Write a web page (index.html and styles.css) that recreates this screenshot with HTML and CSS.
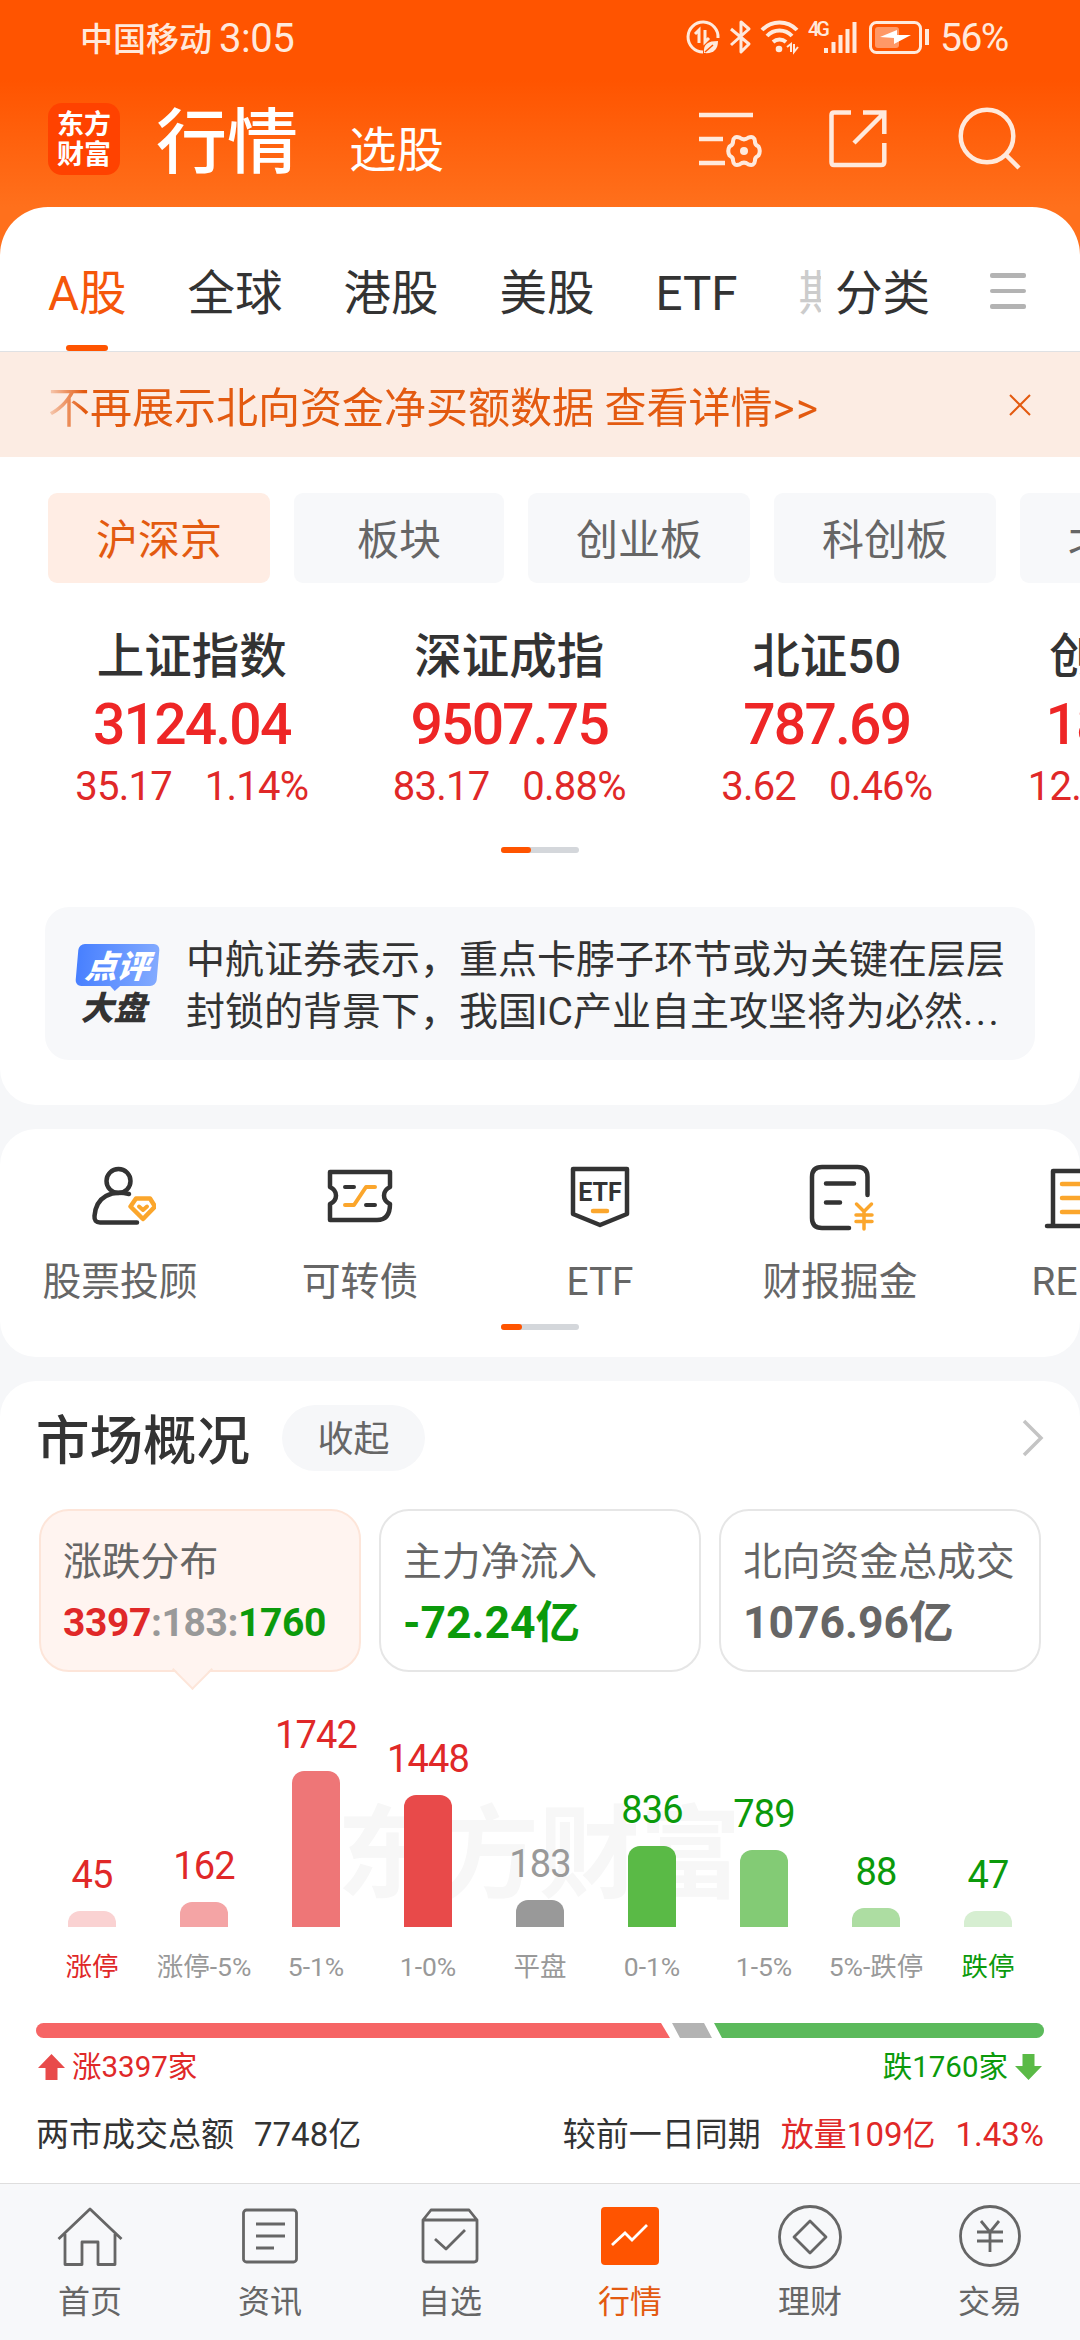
FILE: index.html
```html
<!DOCTYPE html>
<html lang="zh-CN">

<head>
    <meta charset="UTF-8">
    <meta name="viewport" content="width=device-width, initial-scale=1.0">
    <title>行情</title>
    <link rel="stylesheet" href="styles.css">
</head>

<body>
    <div class="status-bar">
        <span class="carrier">中国移动</span>
        <span class="time">3:05</span>
        <svg class="status-icons" width="244" height="36" viewBox="0 0 244 36" fill="none" stroke="#ffe9dc" stroke-width="3">
            <path d="M33 19A15 15 0 1 0 18 33" />
            <path d="M10 15l4-4v13M20 11v12l4-4" />
            <path d="M19 34c-1-9 4-12 14-12c0 8-4 13-14 12z" fill="#ffe9dc" stroke="none" />
            <path d="M20 33l8-7" stroke="#ff5400" stroke-width="1.5" />
            <path d="M46 10L64 25L56 33V3L64 10L46 26" stroke-linejoin="round" />
            <path d="M77 11a24 24 0 0 1 35 0M82 17a17 17 0 0 1 25 0M88 23a10 10 0 0 1 13 0" stroke-width="4" />
            <circle cx="94" cy="30" r="3.3" fill="#ffe9dc" stroke="none" />
            <path d="M102 28l4-3v8M109 25v8l4-5" stroke-width="2" />
            <path d="M141 34v-5M148.500 34v-11M155.500 34v-18M162.500 34v-24M169.500 34v-31" stroke-width="4" />
            <rect x="185.500" y="3.500" width="50" height="30" rx="6" />
            <rect x="190" y="8" width="24" height="21" rx="3" fill="#ff9866" stroke="none" />
            <path d="M195 18l17-7v5h14l-17 9v-6z" fill="#fff" stroke="none" />
            <path d="M242 10v16" stroke-width="4" />
            <text class="net" x="123" y="17">4G</text>
        </svg>
        <span class="percent">56%</span>
    </div>

    <header class="header">
        <div class="logo">东方<br>财富</div>
        <div class="titles">
            <h1>行情</h1>
            <span>选股</span>
        </div>
        <svg class="header-icons" width="324" height="66" viewBox="0 0 324 66" fill="none" stroke="#ffe9dc" stroke-width="4.500">
            <path d="M0 9H54M0 33H24M0 57H26" />
            <path d="M40.800 31.700Q45 35 49.200 31.700Q55.500 29.500 56 35.500Q55.500 38.500 59.500 40.500Q62 45 59.500 49.500Q55.500 51.500 56 54.500Q55.500 60.500 49.200 58.300Q45 55 40.800 58.300Q34.500 60.500 34 54.500Q34.500 51.500 30.500 49.500Q28 45 30.500 40.500Q34.500 38.500 34 35.500Q34.500 29.500 40.800 31.700Z" stroke-width="4" />
            <circle cx="45" cy="45" r="4" fill="#ffe9dc" stroke="none" />
            <path d="M152 6.500H135Q132.500 6.500 132.500 9V56Q132.500 59 135 59H182Q185.300 59 185.300 56V37M164 6.500H185.300V28M185 7L155 37" />
            <circle cx="288" cy="30" r="26.300" />
            <path d="M307 49L320 62" />
        </svg>
    </header>

    <main>
        <section class="card quotes">
            <nav class="market-tabs">
                <div class="tab-scroll">
                    <div class="tab active">A股</div>
                    <div class="tab">全球</div>
                    <div class="tab">港股</div>
                    <div class="tab">美股</div>
                    <div class="tab">ETF</div>
                    <div class="tab faded">期货</div>
                </div>
                <div class="tab category">分类</div>
                <div class="menu-button"><i></i><i></i><i></i></div>
            </nav>

            <div class="notice">
                <p>不再展示北向资金净买额数据 查看详情<span>&gt;&gt;</span></p>
                <svg width="22" height="22" viewBox="0 0 22 22" fill="none" stroke="#e35a10" stroke-width="2">
                    <path d="M1 1L21 21M21 1L1 21" />
                </svg>
            </div>

            <div class="chips">
                <div class="chip active">沪深京</div>
                <div class="chip">板块</div>
                <div class="chip">创业板</div>
                <div class="chip">科创板</div>
                <div class="chip">北交所</div>
            </div>

            <div class="indices">
                <div class="index">
                    <h3>上证指数</h3>
                    <strong>3124.04</strong>
                    <p><span>35.17</span><span>1.14%</span></p>
                </div>
                <div class="index">
                    <h3>深证成指</h3>
                    <strong>9507.75</strong>
                    <p><span>83.17</span><span>0.88%</span></p>
                </div>
                <div class="index">
                    <h3>北证50</h3>
                    <strong>787.69</strong>
                    <p><span>3.62</span><span>0.46%</span></p>
                </div>
                <div class="index">
                    <h3>创业板指</h3>
                    <strong>1855.84</strong>
                    <p><span>12.66</span><span>0.69%</span></p>
                </div>
            </div>
            <div class="pager"><i></i></div>

            <div class="comment">
                <div class="comment-badge">
                    <div class="badge-top"><span>点评</span></div>
                    <div class="badge-bottom">大盘</div>
                </div>
                <p>中航证券表示，重点卡脖子环节或为关键在层层<br>封锁的背景下，我国IC产业自主攻坚将为必然<span>...</span></p>
            </div>
        </section>

        <section class="card shortcuts">
            <div class="shortcut-row">
                <div class="shortcut">
                    <svg width="72" height="72" viewBox="0 0 72 72" fill="none" stroke="#333" stroke-width="4.500" stroke-linecap="round" stroke-linejoin="round">
                        <circle cx="34.500" cy="21" r="12" />
                        <path d="M45 34C28 30 12 36 10.500 56Q10 62.500 16 62.500H53" />
                        <path d="M52 38.500H66L71 46.500L59 59L46.500 46.500Z" stroke="#fba62c" />
                        <path d="M55 46.500L59 50L63 46.500" stroke="#fba62c" stroke-width="4" />
                    </svg>
                    <span>股票投顾</span>
                </div>
                <div class="shortcut">
                    <svg width="72" height="72" viewBox="0 0 72 72" fill="none" stroke="#333" stroke-width="4.500" stroke-linecap="round" stroke-linejoin="round">
                        <path d="M6 12H66V27C58 31 58 40 66 44C66 54 62 60 53 60H6V44C14 40 14 31 6 27Z" />
                        <path d="M21 27H30M42 45H51" stroke-width="4" />
                        <path d="M21 45H30L42 27H51" stroke="#fba62c" stroke-width="4" />
                    </svg>
                    <span>可转债</span>
                </div>
                <div class="shortcut">
                    <svg width="72" height="72" viewBox="0 0 72 72" fill="none" stroke="#333" stroke-width="4.500" stroke-linecap="round" stroke-linejoin="round">
                        <path d="M9 9H63V54L36 65L9 54Z" />
                        <text class="etf-mark" x="36" y="41" text-anchor="middle">ETF</text>
                        <path d="M29 51H43" stroke="#fba62c" />
                    </svg>
                    <span>ETF</span>
                </div>
                <div class="shortcut">
                    <svg width="72" height="72" viewBox="0 0 72 72" fill="none" stroke="#333" stroke-width="4.500" stroke-linecap="round" stroke-linejoin="round">
                        <path d="M63.500 35V17Q63.500 7 53.500 7H18Q8 7 8 17V58Q8 68 18 68H45" />
                        <path d="M22 23.500H50M22 42.500H36" />
                        <path d="M52.500 44L60 51.500L67.500 44M60 51.500V69M52 55H68M52 61.500H68" stroke="#fba62c" stroke-width="3.500" />
                    </svg>
                    <span>财报掘金</span>
                </div>
                <div class="shortcut">
                    <svg width="72" height="72" viewBox="0 0 72 72" fill="none" stroke="#333" stroke-width="4.500" stroke-linecap="round" stroke-linejoin="round">
                        <path d="M9 65V11H62V65M3 66H69" />
                        <path d="M18 24H44M18 38H44M18 52H44" stroke="#fba62c" />
                    </svg>
                    <span>REITs</span>
                </div>
            </div>
            <div class="pager short"><i></i></div>
        </section>

        <section class="card overview">
            <div class="overview-head">
                <h2>市场概况</h2>
                <div class="collapse">收起</div>
                <svg width="22" height="38" viewBox="0 0 22 38" fill="none" stroke="#c4c4c4" stroke-width="3.500">
                    <path d="M2 2L19 19L2 36" />
                </svg>
            </div>

            <div class="summary">
                <div class="summary-box active">
                    <p>涨跌分布</p>
                    <b><span class="up">3397</span><span class="flat">:183:</span><span class="down">1760</span></b>
                </div>
                <div class="summary-box">
                    <p>主力净流入</p>
                    <b class="down">-72.24亿</b>
                </div>
                <div class="summary-box">
                    <p>北向资金总成交</p>
                    <b>1076.96亿</b>
                </div>
            </div>

            <div class="chart">
                <div class="watermark">东方财富</div>
                <div class="column red"><b>45</b><i style="height: 16px"></i><span class="edge">涨停</span></div>
                <div class="column red"><b>162</b><i style="height: 25px"></i><span>涨停-5%</span></div>
                <div class="column red"><b>1742</b><i style="height: 156px"></i><span>5-1%</span></div>
                <div class="column red"><b>1448</b><i style="height: 132px"></i><span>1-0%</span></div>
                <div class="column gray"><b>183</b><i style="height: 27px"></i><span>平盘</span></div>
                <div class="column green"><b>836</b><i style="height: 81px"></i><span>0-1%</span></div>
                <div class="column green"><b>789</b><i style="height: 77px"></i><span>1-5%</span></div>
                <div class="column green"><b>88</b><i style="height: 19px"></i><span>5%-跌停</span></div>
                <div class="column green"><b>47</b><i style="height: 16px"></i><span class="edge">跌停</span></div>
            </div>

            <div class="ratio">
                <i class="ratio-up"></i>
                <i class="ratio-flat"></i>
                <i class="ratio-down"></i>
            </div>
            <div class="ratio-text">
                <svg width="27" height="27" viewBox="0 0 27 27" fill="#e84a4a">
                    <path d="M13.500 0L27 14H19.500V26H7.500V14H0Z" />
                </svg>
                <span class="up">涨3397家</span>
                <span class="down">跌1760家</span>
                <svg width="27" height="27" viewBox="0 0 27 27" fill="#5aba46">
                    <path d="M13.500 26L27 12H19.500V0H7.500V12H0Z" />
                </svg>
            </div>

            <div class="turnover">
                <span>两市成交总额</span>
                <span class="amount">7748亿</span>
                <span class="compare">较前一日同期</span>
                <span class="up">放量109亿</span>
                <span class="up">1.43%</span>
            </div>
        </section>
    </main>

    <nav class="bottom-nav">
        <div class="nav-item">
            <svg width="66" height="66" viewBox="0 0 66 66" fill="none" stroke="#666" stroke-width="2.800" stroke-linejoin="round">
                <path d="M1.500 36L33 6L64.500 36M8 31V61.500H25V39H41V61.500H58V31" />
            </svg>
            <span>首页</span>
        </div>
        <div class="nav-item">
            <svg width="66" height="66" viewBox="0 0 66 66" fill="none" stroke="#666" stroke-width="2.800">
                <rect x="6.500" y="7" width="53" height="52" rx="3" />
                <path d="M19 21H48M19 33H48M19 45H37" />
            </svg>
            <span>资讯</span>
        </div>
        <div class="nav-item">
            <svg width="66" height="66" viewBox="0 0 66 66" fill="none" stroke="#666" stroke-width="2.800" stroke-linejoin="round">
                <path d="M6 17L14 7H52L60 17M6 17H60V56Q60 59 57 59H9Q6 59 6 56ZM18 36L29 46L48 27" />
            </svg>
            <span>自选</span>
        </div>
        <div class="nav-item active">
            <svg width="66" height="66" viewBox="0 0 66 66" fill="none" stroke="#fff" stroke-width="2.800">
                <rect x="4" y="4" width="58" height="58" rx="4" fill="#ff5400" stroke="none" />
                <path d="M15 42L28 30L35 37L50 22" />
            </svg>
            <span>行情</span>
        </div>
        <div class="nav-item">
            <svg width="66" height="66" viewBox="0 0 66 66" fill="none" stroke="#666" stroke-width="2.800" stroke-linejoin="round">
                <circle cx="33" cy="34" r="30.500" />
                <path d="M33 18L49 34L33 50L17 34Z" />
            </svg>
            <span>理财</span>
        </div>
        <div class="nav-item">
            <svg width="66" height="66" viewBox="0 0 66 66" fill="none" stroke="#666" stroke-width="2.800">
                <circle cx="33" cy="33" r="29.500" />
                <path d="M24 18L33 29L42 18M33 29V49M20 29H46M20 38H46" />
            </svg>
            <span>交易</span>
        </div>
    </nav>
</body>

</html>
```
FILE: styles.css
```css
* {
    box-sizing: border-box;
}

body {
    font-family: Roboto, "Noto Sans CJK SC", sans-serif;
    margin: 0;
    width: 1080px;
    height: 2340px;
    display: flex;
    flex-direction: column;
    overflow: hidden;
    background: linear-gradient(#ff5400 0, #ff5400 80px, #ff701c 207px, #ff701c 300px, #f6f7f9 300px);
    color: #333;
    white-space: nowrap;
}

h1,
h2,
h3,
p {
    margin: 0;
    font-weight: 400;
}

.up {
    color: #e02828;
}

.flat {
    color: #999;
}

.down {
    color: #0b9a0b;
}

/* Status bar */
.status-bar {
    height: 74px;
    padding-left: 80px;
    display: flex;
    align-items: center;
    color: #ffe9dc;
    font-size: 33px;
    flex-shrink: 0;
}

.carrier {
    font-weight: 500;
}

.time {
    margin-left: 7px;
    padding-top: 2px;
    font-size: 40px;
    letter-spacing: -0.5px;
    width: 76px;
}

.status-icons {
    margin-left: 390px;
}

.net {
    font-size: 20px;
    font-weight: 500;
    fill: #ffe9dc;
    stroke: none;
    letter-spacing: -3px;
}

.percent {
    margin-left: 11px;
    padding-top: 2px;
    font-size: 39px;
    letter-spacing: -1.5px;
}

/* Header */
.header {
    height: 133px;
    padding: 0 0 3px 48px;
    display: flex;
    align-items: center;
    color: #fff;
    flex-shrink: 0;
}

.logo {
    width: 72px;
    height: 72px;
    border-radius: 14px;
    background: #ff4200;
    font-family: "Noto Sans CJK SC", sans-serif;
    font-size: 27px;
    font-weight: 700;
    line-height: 30px;
    text-align: center;
    padding-top: 5px;
}

.titles {
    display: flex;
    align-items: baseline;
    width: 400px;
    margin-left: 36px;
    padding-top: 7px;
}

.titles h1 {
    font-size: 71px;
    font-weight: 500;
    line-height: 84px;
}

.titles span {
    margin-left: 51px;
    padding-top: 3px;
    font-size: 47.500px;
}

.header-icons {
    margin-left: 143px;
}

/* Cards */
main {
    display: flex;
    flex-direction: column;
    gap: 24px;
    flex: 1;
}

.card {
    background: #fff;
    border-radius: 36px;
    overflow: hidden;
}

.quotes {
    height: 898px;
    border-radius: 48px 48px 36px 36px;
}

.market-tabs {
    height: 145px;
    padding: 57px 0 0 48px;
    display: flex;
    border-bottom: 1px solid #dfe1e4;
}

.tab-scroll {
    width: 773px;
    display: flex;
    gap: 61px;
    overflow: hidden;
}

.tab {
    font-size: 47.500px;
    line-height: 60px;
    flex-shrink: 0;
}

.tab.active {
    color: #f5560a;
    display: flex;
    flex-direction: column;
    align-items: center;
}

.tab.active::after {
    content: "";
    width: 42px;
    height: 6px;
    margin-top: 21px;
    border-radius: 3px;
    background: #ff5400;
}

.tab.faded {
    color: #ccc;
}

.tab.category {
    margin-left: 14px;
    width: 155px;
}

.menu-button {
    display: flex;
    flex-direction: column;
    gap: 11px;
    padding-top: 9px;
}

.menu-button i {
    width: 36px;
    height: 4.5px;
    border-radius: 2px;
    background: #b3b3b3;
}

.notice {
    height: 105px;
    padding: 0 49px 0 48px;
    display: flex;
    align-items: center;
    justify-content: space-between;
    background: #fcece3;
    color: #e35a10;
}

.notice p {
    font-size: 42px;
    mask-image: linear-gradient(90deg, rgba(0, 0, 0, 0.2), #000 36px);
}

.notice span {
    letter-spacing: 1.5px;
}

.chips {
    display: flex;
    gap: 24px;
    padding: 36px 0 0 48px;
}

.chip {
    height: 90px;
    padding: 0 48px;
    border-radius: 9px;
    background: #f7f8fa;
    color: #666;
    font-size: 42px;
    line-height: 95px;
    flex-shrink: 0;
}

.chip:nth-child(2) {
    padding: 0 63px;
}

.chip.active {
    background: #ffede4;
    color: #e35a10;
}

.indices {
    display: flex;
    padding: 40px 0 0 33px;
}

.index {
    width: 317.5px;
    flex-shrink: 0;
    display: flex;
    flex-direction: column;
    align-items: center;
    color: #e02828;
}

.index h3 {
    font-size: 47.500px;
    font-weight: 500;
    line-height: 69px;
    color: #333;
}

.index strong {
    font-size: 57px;
    font-weight: 500;
    line-height: 66px;
    letter-spacing: -1.8px;
    color: #ee2626;
}

.index p {
    display: flex;
    gap: 33px;
    font-size: 40px;
    line-height: 58px;
    letter-spacing: -0.8px;
}

.pager {
    width: 78px;
    height: 6px;
    margin: 31px auto 0;
    border-radius: 3px;
    background: #d4d7db;
    display: flex;
}

.pager i {
    width: 30px;
    border-radius: 3px;
    background: #ff5400;
}

.pager.short {
    margin-top: 18px;
}

.pager.short i {
    width: 21px;
}

.comment {
    height: 153px;
    margin: 54px 45px 0;
    padding: 0 30px;
    border-radius: 24px;
    background: #f7f8fa;
    display: flex;
    align-items: center;
}

.comment p {
    margin-left: 26px;
    padding-top: 5px;
    font-size: 39px;
    line-height: 52px;
}

.comment p span {
    letter-spacing: 2.5px;
}

.comment-badge {
    width: 86px;
    height: 80px;
    font-family: "Noto Sans CJK SC", sans-serif;
    font-style: italic;
    font-weight: 900;
    text-align: center;
}

.badge-top {
    position: relative;
    height: 42px;
    margin: 0 2px;
    border-radius: 6px;
    transform: skewX(-5deg);
    background: linear-gradient(90deg, #4880ff, #82aaff);
    color: #fff;
    font-size: 32px;
    line-height: 40px;
}

.badge-top::after {
    content: "";
    position: absolute;
    left: 35px;
    top: 42px;
    border: 5px solid transparent;
    border-top-color: #6493ff;
    border-bottom: 0;
}

.badge-bottom {
    margin: 0 8px 0 0;
    font-size: 33px;
    line-height: 40px;
}

/* Shortcuts */
.shortcuts {
    height: 228px;
}

.shortcut-row {
    display: flex;
    padding-top: 31px;
}

.shortcut {
    width: 240px;
    flex-shrink: 0;
    display: flex;
    flex-direction: column;
    align-items: center;
    font-size: 38.8px;
    line-height: 56px;
    color: #666;
}

.shortcut span {
    margin-top: 22px;
}

.pager.short {
    margin-top: 14px;
}

.etf-mark {
    font-size: 25px;
    font-weight: 700;
    fill: #333;
    stroke: none;
}

/* Market overview */
.overview {
    flex: 1;
    padding: 0 36px;
    border-radius: 36px 36px 0 0;
}

.overview-head {
    display: flex;
    align-items: center;
    padding-top: 24px;
}

.overview-head h2 {
    font-size: 53.500px;
    font-weight: 500;
    line-height: 58px;
    padding-top: 8px;
    width: 246px;
}

.collapse {
    width: 143px;
    height: 66px;
    border-radius: 33px;
    background: #f6f7f9;
    color: #666;
    font-size: 36px;
    line-height: 71px;
    text-align: center;
}

.overview-head svg {
    margin-left: auto;
}

.summary {
    display: flex;
    gap: 18px;
    padding: 38px 3px 0;
}

.summary-box {
    position: relative;
    width: 322px;
    height: 163px;
    padding: 24px 0 0 22px;
    border: 2px solid #e6e6e6;
    border-radius: 30px;
    color: #666;
}

.summary-box p {
    font-size: 38.8px;
    line-height: 54px;
}

.summary-box b {
    display: block;
    font-size: 44.500px;
    line-height: 68px;
}

.summary-box.active {
    background: #fff4f0;
    border-color: #fde5d9;
}

.summary-box.active b {
    font-size: 39px;
    letter-spacing: -0.4px;
}

.summary-box.active::after {
    content: "";
    position: absolute;
    left: 137px;
    top: 144px;
    width: 27px;
    height: 27px;
    transform: rotate(45deg);
    background: linear-gradient(135deg, transparent 50%, #fff4f0 50%);
    border: 2px solid #fde5d9;
    border-left: 0;
    border-top: 0;
}

.chart {
    position: relative;
    height: 351px;
    display: flex;
    align-items: flex-end;
    padding: 0 0 38px;
}

.watermark {
    position: absolute;
    left: 301px;
    top: 109px;
    font-size: 101px;
    font-weight: 700;
    line-height: 150px;
    color: #f7f7f7;
}

.column {
    position: relative;
    width: 112px;
    display: flex;
    flex-direction: column;
    align-items: center;
    flex-shrink: 0;
}

.column b {
    font-size: 38px;
    font-weight: 400;
    line-height: 44px;
    letter-spacing: -0.9px;
    margin-bottom: 14px;
}

.column i {
    width: 48px;
    border-radius: 12px 12px 0 0;
}

.column span {
    margin-top: 22px;
    font-size: 26.500px;
    line-height: 36px;
    color: #999;
}

.red b,
.red .edge {
    color: #e02828;
}

.green b,
.green .edge {
    color: #0b9a0b;
}

.gray b {
    color: #999;
}

.column:nth-child(2) i {
    background: #fad2d2;
}

.column:nth-child(3) i {
    background: #f4a4a5;
}

.column:nth-child(4) i {
    background: #ee7677;
}

.column:nth-child(5) i {
    background: #e84a4a;
}

.column:nth-child(6) i {
    background: #999;
}

.column:nth-child(7) i {
    background: #5aba46;
}

.column:nth-child(8) i {
    background: #83cb75;
}

.column:nth-child(9) i {
    background: #addda2;
}

.column:nth-child(10) i {
    background: #d6eed1;
}

.ratio {
    height: 15px;
    display: flex;
    gap: 2px;
}

.ratio-up {
    width: 634px;
    border-radius: 8px 0 0 8px;
    background: #f66565;
    clip-path: polygon(0 0, 625px 0, 100% 100%, 0 100%);
}

.ratio-flat {
    width: 40px;
    background: #b3b3b3;
    clip-path: polygon(0 0, 32px 0, 100% 100%, 8px 100%);
}

.ratio-down {
    flex: 1;
    border-radius: 0 8px 8px 0;
    background: #5cba5c;
    clip-path: polygon(0 0, 100% 0, 100% 100%, 8px 100%);
}

.ratio-text {
    display: flex;
    align-items: center;
    gap: 7px;
    padding: 10px 2px 0;
    font-size: 29.500px;
    line-height: 38px;
}

.ratio-text .down {
    margin-left: auto;
}

.turnover {
    display: flex;
    gap: 20px;
    margin-top: 28px;
    font-size: 33px;
    line-height: 42px;
}

.compare {
    margin-left: auto;
}

/* Bottom navigation */
.bottom-nav {
    height: 157px;
    padding-top: 19px;
    border-top: 1px solid #dedede;
    background: #f7f8fa;
    display: flex;
    flex-shrink: 0;
}

.nav-item {
    width: 180px;
    display: flex;
    flex-direction: column;
    align-items: center;
    color: #666;
    font-size: 32px;
    line-height: 40px;
}

.nav-item span {
    margin-top: 13px;
}

.nav-item.active {
    color: #e35a10;
}
```
